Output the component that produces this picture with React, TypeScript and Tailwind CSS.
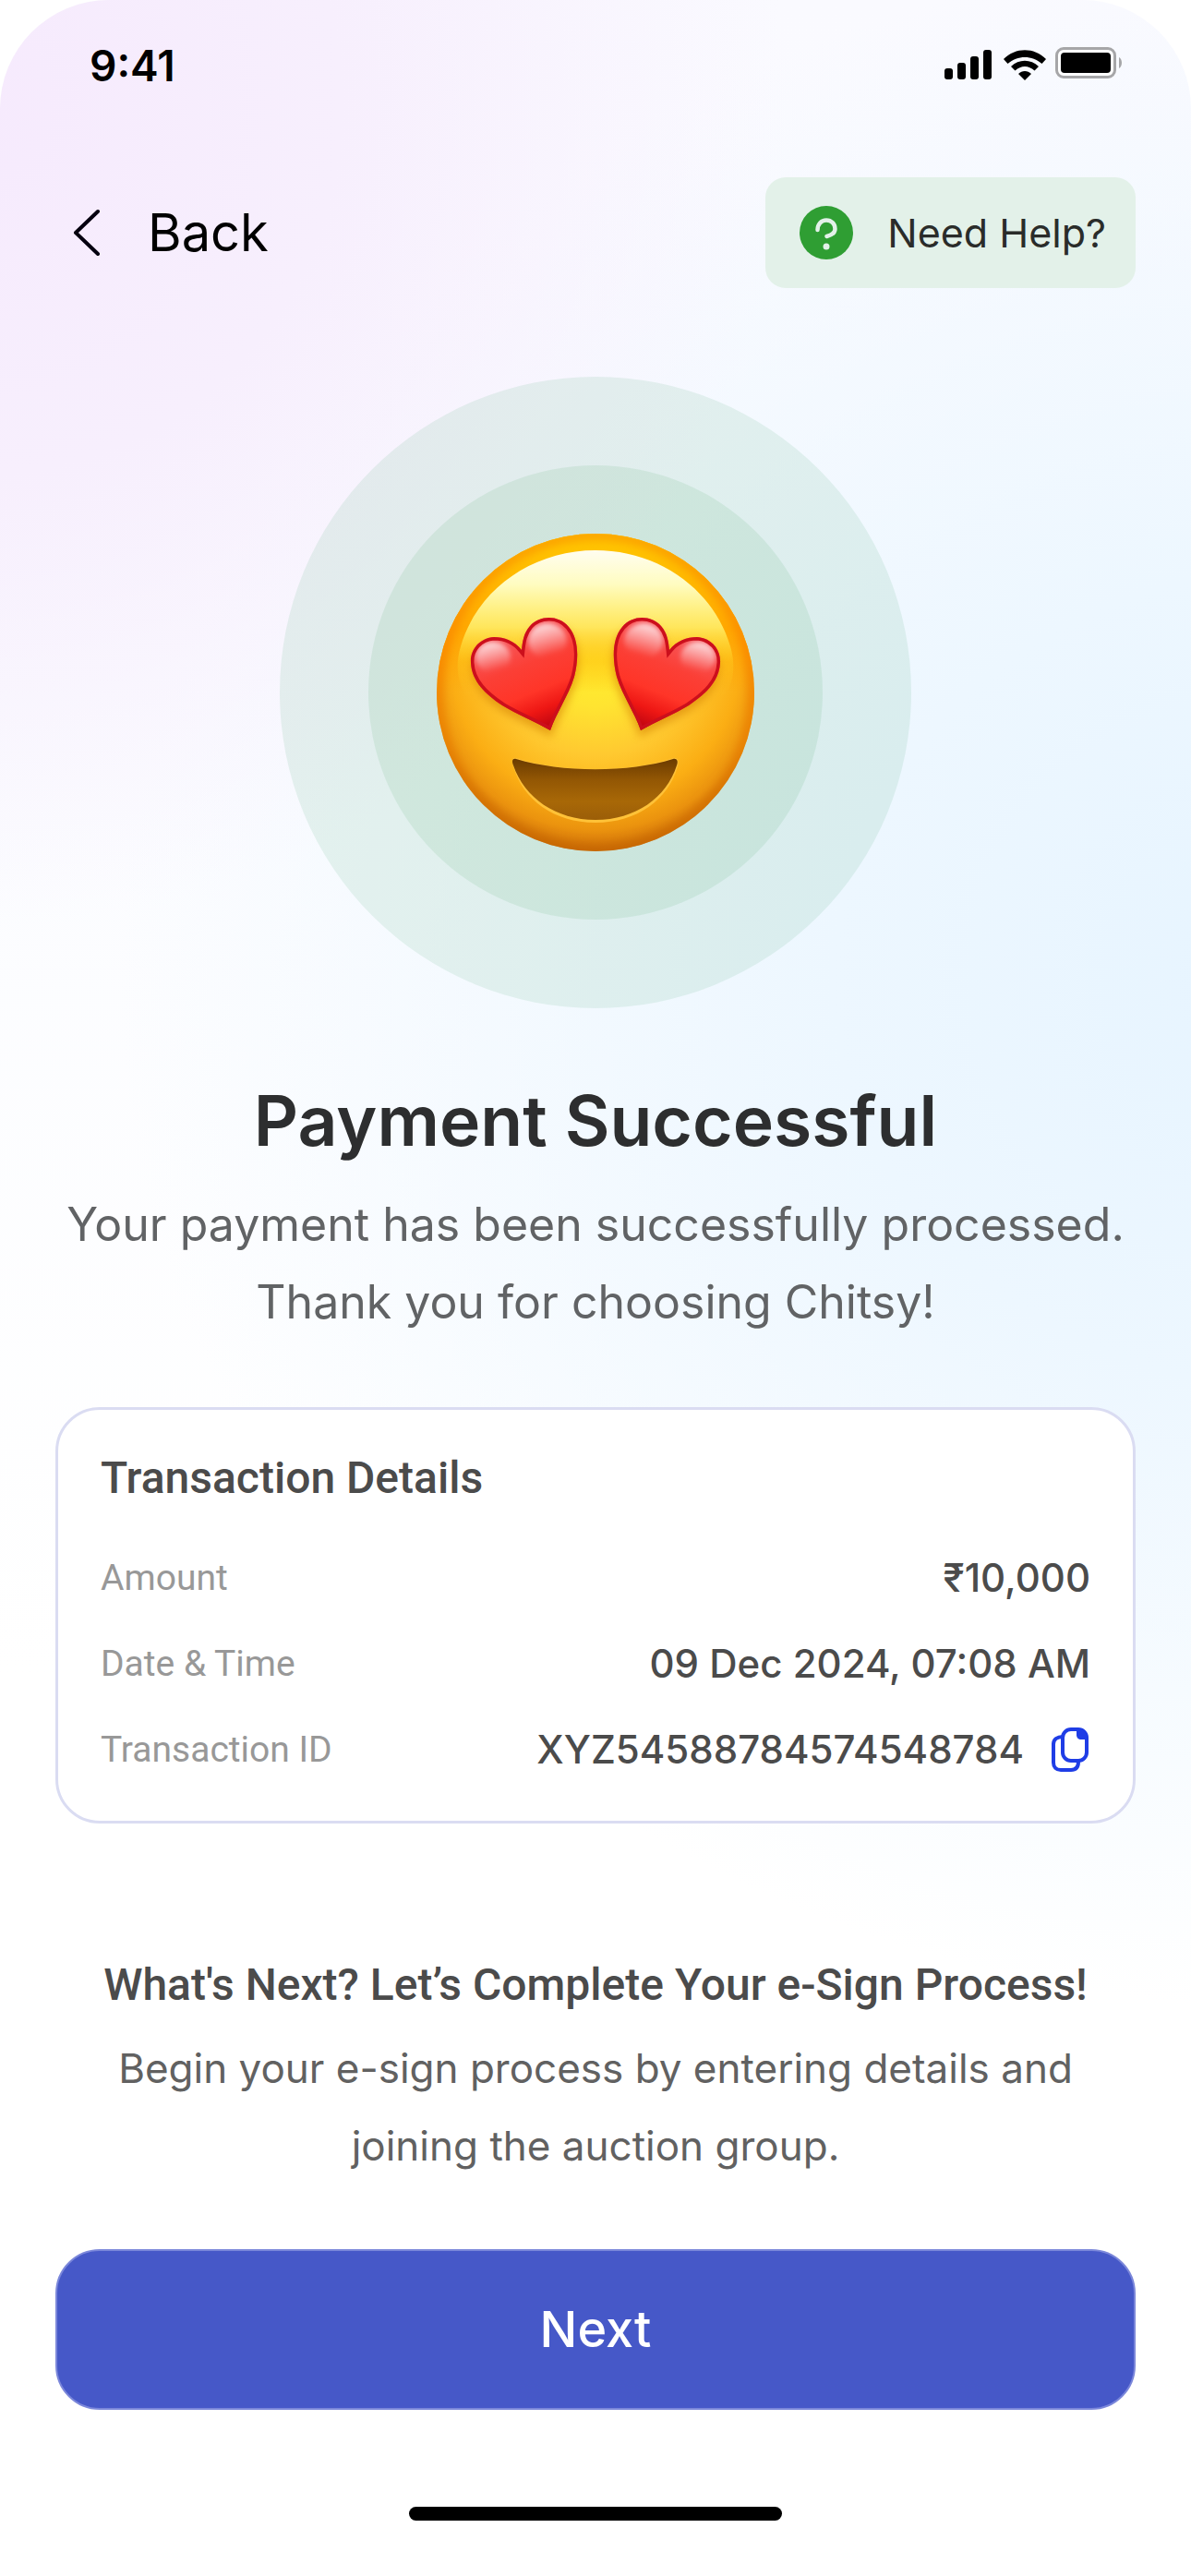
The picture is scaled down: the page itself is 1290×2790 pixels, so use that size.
import { useState } from 'react';

const transaction = {
  amount: '₹10,000',
  date: '09 Dec 2024, 07:08 AM',
  id: 'XYZ54588784574548784',
};

function StatusBar() {
  return (
    <div className="flex h-[142px] items-center justify-between pr-[74px] pl-[97px]">
      <span className="text-[46px] leading-[60px] font-semibold text-black">9:41</span>
      <svg width="194" height="36" viewBox="0 0 194 36" className="-mt-1" aria-hidden="true">
        {/* signal */}
        <rect x="1" y="23" width="9" height="12" rx="3" />
        <rect x="15" y="17" width="9" height="18" rx="3" />
        <rect x="29" y="10" width="9" height="25" rx="3" />
        <rect x="43" y="3" width="9" height="32" rx="3" />
        {/* wifi */}
        <path d="M65 13C78 0 98 0 111 13L106.500 18C96 8.500 80 8.500 69.500 18Z" />
        <path d="M73 21C81.500 12.500 94.500 12.500 103 21L98.500 25.500C92 19.500 84 19.500 77.500 25.500Z" />
        <path d="M81 29C85 25 91 25 95 29L88 36Z" />
        {/* battery */}
        <rect x="122.500" y="1.500" width="63" height="31" rx="7.500" fill="#ffffff" stroke="#a6a6a8" strokeWidth="3" />
        <rect x="127" y="6" width="54" height="22" rx="4" />
        <path d="M190 11C194 13 194 21 190 23Z" fill="#a6a6a8" />
      </svg>
    </div>
  );
}

function HelpIcon() {
  return (
    <svg width="60" height="60" viewBox="0 0 60 60" fill="none" aria-hidden="true">
      <circle cx="30" cy="30" r="29" fill="#2f9e33" />
      <path
        d="M20.500 27C20.500 21 24.500 16.500 30 16.500C35.500 16.500 39.500 20.500 39.500 26C39.500 30 36 32.500 30.500 34"
        stroke="#e3f1e9"
        strokeWidth="4.500"
        strokeLinecap="round"
        strokeLinejoin="round"
      />
      <circle cx="30" cy="45" r="3.500" fill="#e3f1e9" />
    </svg>
  );
}

function CopyIcon() {
  return (
    <svg width="44" height="50" viewBox="0 0 44 50" fill="none" stroke="#1f3de6" strokeWidth="4" aria-hidden="true">
      <rect x="14" y="3" width="26" height="34" rx="9" />
      <path d="M14 11C8 11 4 14 4 19V39C4 44 7 47 12 47H23C28 47 31 44 31 38" />
      <path d="M29 2V9C29 12 31 14 34 14H41C41 7 37 2 29 2Z" fill="#1f3de6" stroke="none" />
    </svg>
  );
}

function HeartEyes() {
  const heart =
    'M106 144C98 134 87 130 76 130C61 131 50 143 51 158C52 178 67 192 85 204C101 214 120 221 137 231C144 211 157 193 163 173C168 153 168 132 157 119C146 106 126 106 115 118C108 126 107 135 106 144Z';

  return (
    <svg viewBox="12 16 348 348" className="size-[348px]" role="img" aria-label="Smiling face with heart eyes">
      <defs>
        <radialGradient id="face" gradientUnits="userSpaceOnUse" cx="186" cy="152" r="212">
          <stop offset="0" stopColor="#fff02c" />
          <stop offset="0.25" stopColor="#ffe431" />
          <stop offset="0.5" stopColor="#ffc930" />
          <stop offset="0.74" stopColor="#fbae14" />
          <stop offset="0.88" stopColor="#eb930e" />
          <stop offset="1" stopColor="#c96806" />
        </radialGradient>
        <linearGradient id="rim" x1="0" y1="0" x2="0" y2="1">
          <stop offset="0" stopColor="#fca400" />
          <stop offset="0.35" stopColor="#fb8c00" />
          <stop offset="0.65" stopColor="#e87c00" stopOpacity="0.8" />
          <stop offset="1" stopColor="#c26404" stopOpacity="0.7" />
        </linearGradient>
        <linearGradient id="top" x1="0" y1="0" x2="0" y2="1">
          <stop offset="0" stopColor="#ffc800" />
          <stop offset="0.3" stopColor="#ffa800" />
          <stop offset="0.5" stopColor="#ffa000" stopOpacity="0" />
        </linearGradient>
        <linearGradient id="shine" x1="0" y1="0" x2="0" y2="1">
          <stop offset="0" stopColor="#fffdf0" />
          <stop offset="0.2" stopColor="#fffcc0" />
          <stop offset="0.45" stopColor="#fff572" stopOpacity="0.8" />
          <stop offset="0.65" stopColor="#fff034" stopOpacity="0.2" />
          <stop offset="0.85" stopColor="#ffe431" stopOpacity="0" />
        </linearGradient>
        <linearGradient id="heartFill" gradientUnits="userSpaceOnUse" x1="86" y1="118" x2="132" y2="230">
          <stop offset="0" stopColor="#f5616a" />
          <stop offset="0.4" stopColor="#fb3f36" />
          <stop offset="0.65" stopColor="#ff3528" />
          <stop offset="0.82" stopColor="#ee1714" />
          <stop offset="1" stopColor="#bd0410" />
        </linearGradient>
        <linearGradient id="gloss" x1="0" y1="0" x2="0.300" y2="1">
          <stop offset="0" stopColor="#ffffff" stopOpacity="0.9" />
          <stop offset="1" stopColor="#ffffff" stopOpacity="0" />
        </linearGradient>
        <linearGradient id="mouth" x1="0" y1="0" x2="0" y2="1">
          <stop offset="0" stopColor="#6b3b00" />
          <stop offset="0.35" stopColor="#935704" />
          <stop offset="0.7" stopColor="#a86807" />
          <stop offset="1" stopColor="#9b5e08" />
        </linearGradient>
        <filter id="soft" x="-30%" y="-30%" width="160%" height="160%">
          <feGaussianBlur stdDeviation="5" />
        </filter>
        <filter id="smooth" x="-30%" y="-30%" width="160%" height="160%">
          <feGaussianBlur stdDeviation="2.500" />
        </filter>
        <clipPath id="faceClip">
          <circle cx="186" cy="190" r="172" />
        </clipPath>
        <clipPath id="heartClip">
          <path d={heart} />
        </clipPath>
        <g id="eye">
          <path d={heart} fill="#d27a00" opacity="0.55" filter="url(#soft)" transform="translate(1 7)" />
          <path d={heart} fill="url(#heartFill)" />
          <g clipPath="url(#heartClip)">
            <ellipse cx="75" cy="152" rx="19" ry="17" fill="url(#gloss)" filter="url(#smooth)" />
            <ellipse cx="134" cy="134" rx="21" ry="19" fill="url(#gloss)" filter="url(#smooth)" />
            <path d={heart} fill="none" stroke="#cc0f1c" strokeWidth="7" />
          </g>
        </g>
      </defs>
      <circle cx="186" cy="190" r="172" fill="url(#face)" />
      <circle cx="186" cy="190" r="172" fill="url(#top)" />
      <g clipPath="url(#faceClip)">
        <circle cx="186" cy="190" r="171" fill="none" stroke="url(#rim)" strokeWidth="12" filter="url(#soft)" />
      </g>
      <path
        d="M186 36C118 36 58 78 40 140C28 180 48 218 106 222H266C324 218 344 180 332 140C314 78 254 36 186 36Z"
        fill="url(#shine)"
      />
      <use href="#eye" />
      <use href="#eye" transform="translate(372 0) scale(-1 1)" />
      <path
        d="M100 261C150 277 222 277 270 261C275 260 277 264 275 270C265 306 231 331 186 331C141 331 107 306 97 270C95 264 96 260 100 261Z"
        fill="#ffc238"
      />
      <path
        d="M100 262C150 277 222 277 270 262C274 261 276 264 274 269C263 304 229 328 186 328C143 328 109 304 97 269C95 264 96 261 100 262Z"
        fill="url(#mouth)"
      />
    </svg>
  );
}

export default function App() {
  const [copied, setCopied] = useState(false);

  const handleCopy = () => {
    navigator.clipboard?.writeText(transaction.id);
    setCopied(true);
  };

  return (
    <div className="min-h-screen overflow-hidden rounded-t-[118px] bg-[radial-gradient(ellipse_68%_32%_at_-2%_4%,#f6eafd_0%,#f7effd_45%,transparent_100%),radial-gradient(ellipse_100%_40%_at_110%_38%,#e6f4ff_0%,#edf7ff_40%,transparent_100%),linear-gradient(to_bottom,#fafaff_0%,#fbfcff_30%,#ffffff_65%)] font-['Inter',sans-serif]">
      <StatusBar />

      <header className="mt-[50px] flex items-center justify-between px-[60px]">
        <button type="button" className="flex items-center gap-[50px] pl-[18px] text-[56px] leading-[60px] text-black">
          <svg width="32" height="52" viewBox="0 0 32 52" fill="none" aria-hidden="true">
            <path d="M28 3L4 26L28 49" stroke="#05000f" strokeWidth="4" strokeLinecap="round" strokeLinejoin="round" />
          </svg>
          Back
        </button>
        <button
          type="button"
          className="flex h-[120px] items-center gap-9 rounded-[22px] bg-[#e3f1e9] pr-[32px] pl-[36px] text-[43px] leading-[60px] text-[#2a2c2a]"
        >
          <HelpIcon />
          Need Help?
        </button>
      </header>

      <main className="flex flex-col px-[60px]">
        <div className="mt-24 flex size-[684px] items-center justify-center self-center rounded-full bg-[#2f9e5a]/10">
          <div className="flex size-[492px] items-center justify-center rounded-full bg-[#2f9e4a]/10">
            <HeartEyes />
          </div>
        </div>

        <h1 className="mt-[72px] text-center text-[75px] leading-[100px] font-semibold text-[#2d2e2f]">
          Payment Successful
        </h1>
        <p className="mt-5 text-center text-[50px] leading-[84px] text-[#616365]">
          Your payment has been successfully processed.
          <br />
          Thank you for choosing Chitsy!
        </p>

        <section className="mt-[72px] rounded-[48px] border-3 border-[#dadcf2] bg-white px-[46px] pt-[44px] pb-[47px]">
          <h2 className="font-['Roboto',sans-serif] text-[48px] leading-[60px] font-medium text-[#4b4b4b]">
            Transaction Details
          </h2>
          <dl className="mt-12 flex flex-col gap-[33px] text-[42px] leading-[60px]">
            <div className="flex items-center justify-between">
              <dt className="font-['Roboto',sans-serif] text-[39px] text-[#989898]">Amount</dt>
              <dd className="font-medium text-[#4b4b4b]">{transaction.amount}</dd>
            </div>
            <div className="flex items-center justify-between">
              <dt className="font-['Roboto',sans-serif] text-[39px] text-[#989898]">Date &amp; Time</dt>
              <dd className="font-medium text-[#4b4b4b]">{transaction.date}</dd>
            </div>
            <div className="flex items-center justify-between">
              <dt className="font-['Roboto',sans-serif] text-[39px] text-[#989898]">Transaction ID</dt>
              <dd className="flex items-center gap-7 font-medium text-[#4b4b4b]">
                {transaction.id}
                <button type="button" onClick={handleCopy} aria-label={copied ? 'Copied' : 'Copy transaction ID'}>
                  <CopyIcon />
                </button>
              </dd>
            </div>
          </dl>
        </section>

        <h2 className="mt-[145px] text-center font-['Roboto',sans-serif] text-[48px] leading-[60px] font-medium text-[#4b4b4b]">
          What's Next? Let’s Complete Your e-Sign Process!
        </h2>
        <p className="mt-[18px] text-center text-[44px] leading-[84px] text-[#616161]">
          Begin your e-sign process by entering details and
          <br />
          joining the auction group.
        </p>

        <button
          type="button"
          className="mt-[70px] h-[174px] rounded-[48px] border-2 border-[#7b87da] bg-[#4658c8] text-[54px] leading-[60px] font-medium text-white"
        >
          Next
        </button>
        <div className="mt-[105px] mb-[60px] h-[15px] w-[404px] self-center rounded-full bg-black" />
      </main>
    </div>
  );
}
